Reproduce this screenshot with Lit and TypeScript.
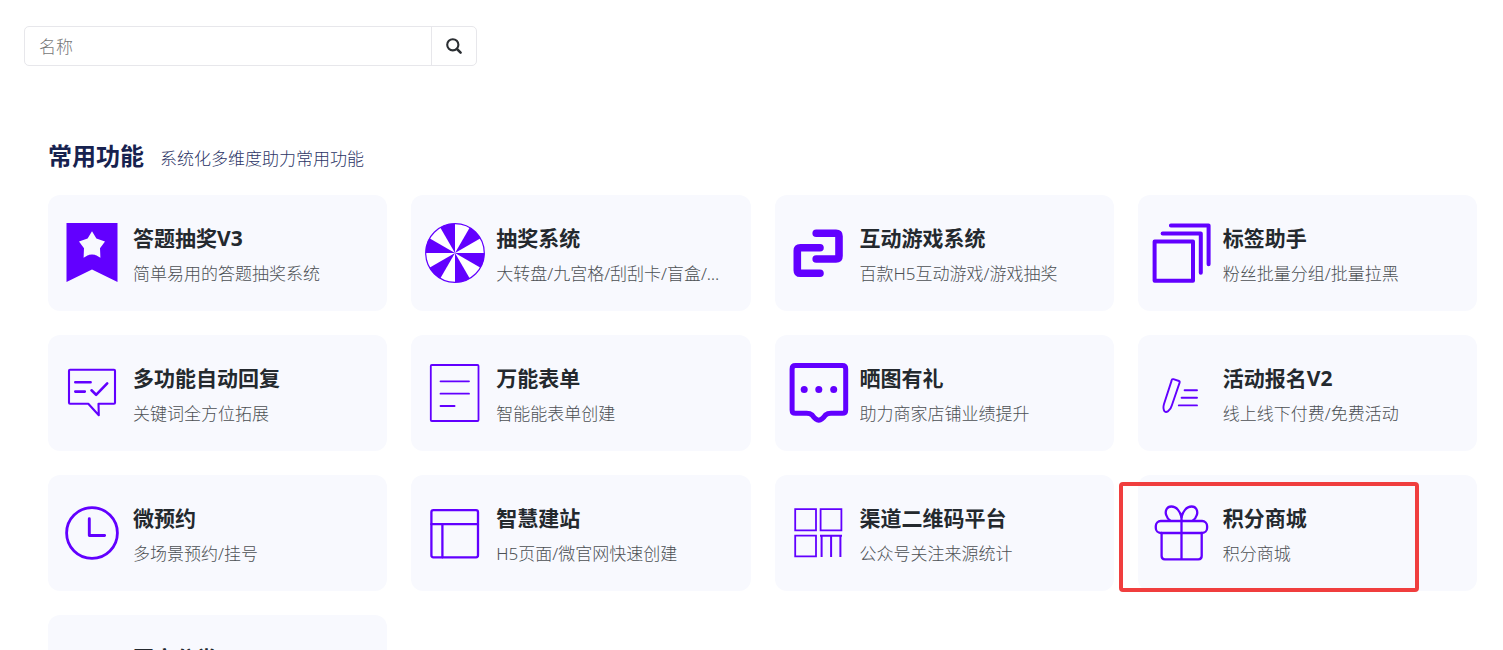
import { LitElement, html, css, svg, nothing, TemplateResult } from "lit";
import { customElement, property } from "lit/decorators.js";
import { classMap } from "lit/directives/class-map.js";

// Feature icons, all drawn on a 60 x 60 grid.
const wheelSlices = [30, 90, 150, 210, 270, 330].map((start) => {
  const point = (deg: number) => {
    const rad = ((deg - 90) * Math.PI) / 180;
    return `${(30 + 29.5 * Math.cos(rad)).toFixed(2)} ${(30 + 29.5 * Math.sin(rad)).toFixed(2)}`;
  };
  return `M30 30L${point(start)}A29.5 29.5 0 0 1 ${point(start + 30)}Z`;
});

const icons: Record<string, TemplateResult> = {
  ribbon: svg`
    <path class="fill" d="M4.5 0H55.5V59L30 46.5L4.5 59Z"/>
    <path class="paper" d="M30 8.2L34.4 15.6L43 18.5L38 25.2L38.4 34.7Q34 31.6 30 31.6T21.6 34.7L22 25.2L17 18.5L25.6 15.6Z"/>`,
  wheel: svg`
    <circle class="disc" cx="30" cy="30" r="29.3" stroke-width="1.2"/>
    ${wheelSlices.map((d) => svg`<path class="fill" d=${d}/>`)}`,
  link: svg`
    <path stroke-width="7.6" d="M27.2 10.3H47Q50 10.3 50 13.3V33Q50 36 47 36H27.2"/>
    <path stroke-width="7.6" d="M31 24.7H11.3Q8.3 24.7 8.3 27.7V47.3Q8.3 50.3 11.3 50.3H31"/>`,
  stack: svg`
    <path stroke-width="4" d="M2.6 18.6H41V57.7H2.6ZM10.6 10.5H48.8V49.7M18.9 2.4H56.6V41.3"/>`,
  reply: svg`
    <path stroke-width="2.1" d="M8 6.8H52Q53 6.8 53 7.8V39.8Q53 40.8 52 40.8H36.5L36.8 52.2L26.3 40.8H8Q7 40.8 7 39.8V7.8Q7 6.8 8 6.8Z"/>
    <path stroke-width="2.6" d="M13.3 19.3H28.6M13.3 28.6H22.8M29.5 27.3L34.1 31.8L45.2 20.4"/>`,
  form: svg`
    <rect stroke-width="1.8" x="5.8" y="2" width="47.7" height="56" rx="1"/>
    <path stroke-width="1.8" d="M15.5 18.3H44M15.5 30.7H44M15.5 43H29.6"/>`,
  chat: svg`
    <path stroke-width="5" d="M6.5 2.6H53.3Q56.7 2.6 56.7 6V46.9Q56.7 50.3 53.3 50.3H42Q38.5 50.3 36.5 52Q33 57 29.8 57.2Q26.6 57 23.1 52Q21.1 50.3 17.6 50.3H6.5Q3.1 50.3 3.1 46.9V6Q3.1 2.6 6.5 2.6Z"/>
    <circle class="fill" cx="15.2" cy="26.4" r="3.5"/>
    <circle class="fill" cx="29.8" cy="26.4" r="3.5"/>
    <circle class="fill" cx="44.7" cy="26.4" r="3.5"/>`,
  pen: svg`
    <path stroke-width="1.9" d="M21.4 16.2L27 18Q28 18.4 27.7 19.4L19.8 42.5Q19 46 15.8 48.4Q14 49.6 12.6 48.4Q10.6 45.5 12 41L19.6 17.6Q20 15.8 21.4 16.2Z"/>
    <path stroke-width="1.9" d="M32.6 27.3H45M29.6 34.8H45M26.8 42.4H45"/>`,
  clock: svg`
    <circle stroke-width="2.8" cx="30" cy="30" r="25.4"/>
    <path stroke-width="2.9" d="M27.3 15.8V32.5H42.6"/>`,
  layout: svg`
    <rect stroke-width="2.3" x="6.4" y="7.1" width="46.6" height="47.2" rx="2"/>
    <path stroke-width="2.3" d="M6.4 21.2H53M17.4 21.2V54.3"/>`,
  qrcode: svg`
    <path class="square" stroke-width="1.8" d="M6.2 6.1H27V27.3H6.2ZM31.6 6.1H52.4V27.3H31.6ZM6.2 32.7H27V53.4H6.2Z"/>
    <path class="square" stroke-width="2" d="M31 32.7H53M32.6 32.7V54M42.1 32.7V54M51.4 32.7V54"/>`,
  gift: svg`
    <rect stroke-width="2.3" x="3.8" y="18" width="51.3" height="12" rx="5"/>
    <path stroke-width="2.3" d="M9.6 30V53Q9.6 56.3 12.8 56.3H46.4Q49.7 56.3 49.7 53V30M29.5 12.5V56"/>
    <path stroke-width="2.3" d="M29.5 14C28.3 9 24.8 3.5 19.3 3.5C14.8 3.5 12.8 8 14.2 12Q15.3 15.5 18 17.4M29.5 14C30.7 9 34.2 3.5 39.7 3.5C44.2 3.5 46.2 8 44.8 12Q43.7 15.5 41 17.4"/>`,
};

interface Feature {
  title: string;
  description?: string;
  icon?: string;
  marked?: boolean;
}

const features: Feature[] = [
  { title: "答题抽奖V3", description: "简单易用的答题抽奖系统", icon: "ribbon" },
  { title: "抽奖系统", description: "大转盘/九宫格/刮刮卡/盲盒/…", icon: "wheel" },
  { title: "互动游戏系统", description: "百款H5互动游戏/游戏抽奖", icon: "link" },
  { title: "标签助手", description: "粉丝批量分组/批量拉黑", icon: "stack" },
  { title: "多功能自动回复", description: "关键词全方位拓展", icon: "reply" },
  { title: "万能表单", description: "智能能表单创建", icon: "form" },
  { title: "晒图有礼", description: "助力商家店铺业绩提升", icon: "chat" },
  { title: "活动报名V2", description: "线上线下付费/免费活动", icon: "pen" },
  { title: "微预约", description: "多场景预约/挂号", icon: "clock" },
  { title: "智慧建站", description: "H5页面/微官网快速创建", icon: "layout" },
  { title: "渠道二维码平台", description: "公众号关注来源统计", icon: "qrcode" },
  { title: "积分商城", description: "积分商城", icon: "gift", marked: true },
  { title: "图文分类" },
];

@customElement("feature-card")
export class FeatureCard extends LitElement {
  @property({ attribute: false }) feature!: Feature;

  static styles = css`
    :host {
      display: block;
      min-width: 0;
    }
    .card {
      position: relative;
      box-sizing: border-box;
      display: flex;
      align-items: flex-start;
      gap: 11px;
      min-height: 116px;
      padding: 28px 14px 25px;
      border-radius: 12px;
      background: #f8f9fe;
      color: inherit;
      text-decoration: none;
    }
    .marked::after {
      content: "";
      position: absolute;
      inset: 7px 58px -1px -19px;
      border: 4px solid #f03e3e;
      border-radius: 4px;
      pointer-events: none;
    }
    .icon {
      flex: none;
      width: 60px;
      height: 60px;
      fill: none;
      stroke: #6200ff;
      stroke-linecap: round;
      stroke-linejoin: round;
    }
    .fill {
      fill: #6200ff;
      stroke: none;
    }
    .paper {
      fill: #f8f9fe;
      stroke: none;
    }
    .disc {
      fill: #ffffff;
    }
    .square {
      stroke-linecap: butt;
      stroke-linejoin: miter;
    }
    .text {
      display: flex;
      flex-direction: column;
      gap: 9px;
      min-width: 0;
    }
    .title {
      margin: 0;
      font-size: 21px;
      font-weight: 700;
      line-height: 30px;
      color: #24292e;
    }
    .description {
      margin: 0;
      overflow: hidden;
      font-size: 17px;
      font-weight: 300;
      line-height: 24px;
      color: #4c5054;
      text-overflow: ellipsis;
      white-space: nowrap;
    }
  `;

  render() {
    const { title, description, icon, marked } = this.feature;
    return html`
      <a class=${classMap({ card: true, marked: !!marked })} href="#">
        <svg class="icon" viewBox="0 0 60 60" aria-hidden="true">${icon ? icons[icon] : nothing}</svg>
        <div class="text">
          <h3 class="title">${title}</h3>
          ${description ? html`<p class="description">${description}</p>` : nothing}
        </div>
      </a>
    `;
  }
}

@customElement("app-root")
export class AppRoot extends LitElement {
  static styles = css`
    :host {
      display: block;
      background: #ffffff;
      font-family: "Noto Sans", "Noto Sans CJK SC", sans-serif;
    }
    .page {
      padding: 26px 26px 24px 24px;
    }
    .search {
      box-sizing: border-box;
      display: flex;
      max-width: 453px;
      height: 40px;
      border: 1px solid #e7e7eb;
      border-radius: 5px;
      overflow: hidden;
    }
    .field {
      flex: 1;
      min-width: 0;
      padding: 2px 14px 0;
      border: 0;
      outline: 0;
      background: transparent;
      font: 300 17px/24px "Noto Sans", "Noto Sans CJK SC", sans-serif;
      color: #333333;
    }
    .field::placeholder {
      color: #777777;
      opacity: 1;
    }
    .submit {
      display: flex;
      align-items: center;
      justify-content: center;
      width: 45px;
      padding: 0;
      border: 0;
      border-left: 1px solid #e7e7eb;
      background: transparent;
      cursor: pointer;
    }
    .glass {
      width: 16px;
      height: 16px;
      fill: none;
      stroke: #2b2f33;
    }
    .features {
      margin-top: 72px;
      padding-left: 24px;
    }
    .header {
      display: flex;
      align-items: baseline;
      gap: 16px;
      margin-bottom: 21px;
    }
    .heading {
      margin: 0;
      font-size: 24px;
      font-weight: 700;
      line-height: 36px;
      color: #17224f;
    }
    .subtitle {
      margin: 0;
      font-size: 17px;
      font-weight: 300;
      line-height: 24px;
      color: #2c3566;
    }
    .grid {
      display: grid;
      grid-template-columns: repeat(4, minmax(0, 1fr));
      gap: 24px;
    }
    @media (max-width: 1100px) {
      .grid {
        grid-template-columns: repeat(2, minmax(0, 1fr));
      }
    }
  `;

  render() {
    return html`
      <main class="page">
        <form class="search" role="search" @submit=${(e: Event) => e.preventDefault()}>
          <input class="field" type="text" name="name" placeholder="名称" aria-label="名称" />
          <button class="submit" type="submit" aria-label="搜索">
            <svg class="glass" viewBox="0 0 16 16" aria-hidden="true">
              <circle cx="6.8" cy="6.8" r="5.6" stroke-width="2.1" />
              <path d="M11 11L14.6 14.6" stroke-width="2.5" stroke-linecap="round" />
            </svg>
          </button>
        </form>
        <section class="features">
          <header class="header">
            <h2 class="heading">常用功能</h2>
            <p class="subtitle">系统化多维度助力常用功能</p>
          </header>
          <div class="grid">
            ${features.map((feature) => html`<feature-card .feature=${feature}></feature-card>`)}
          </div>
        </section>
      </main>
    `;
  }
}
